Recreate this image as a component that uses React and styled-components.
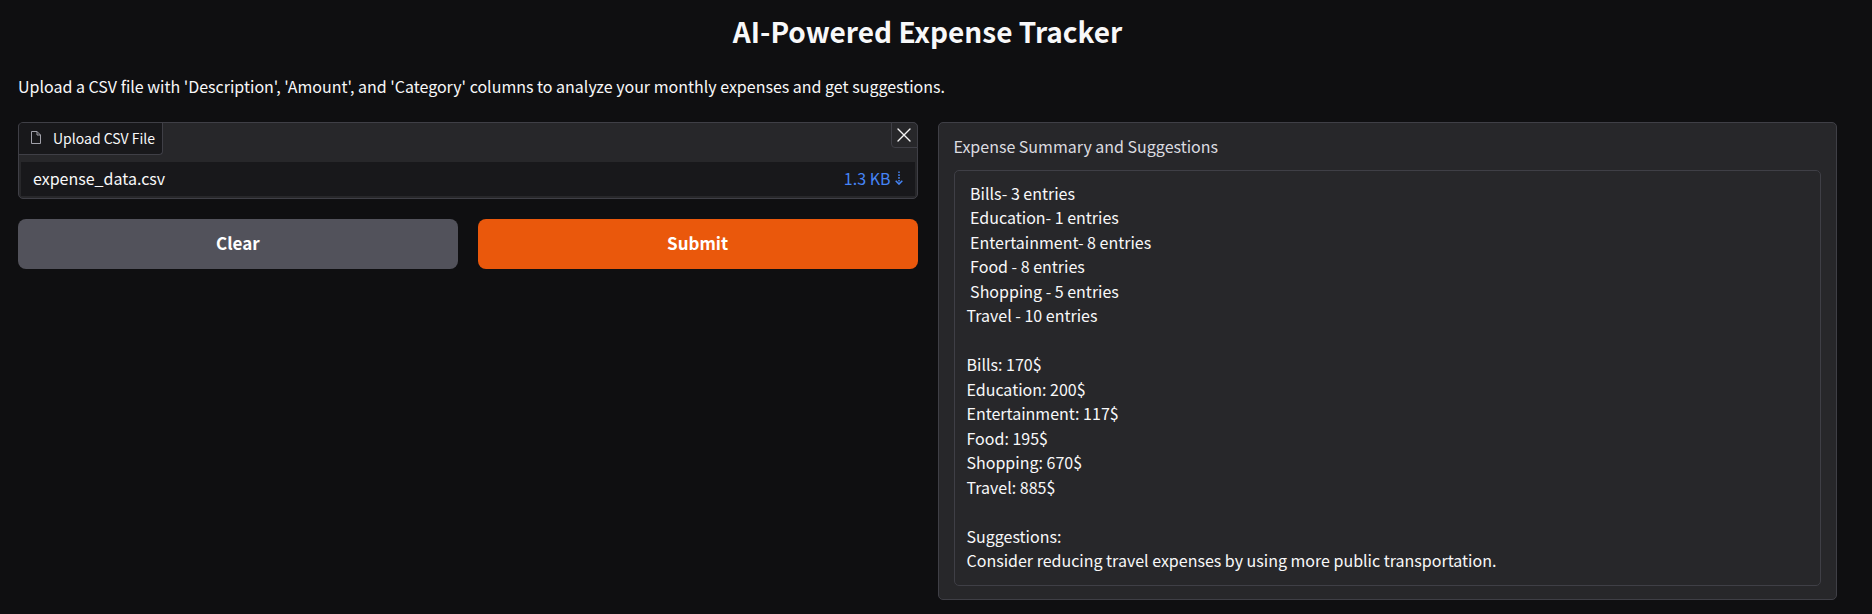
import React from "react";
import styled, { createGlobalStyle } from "styled-components";

const GlobalStyle = createGlobalStyle`
  *, *::before, *::after { box-sizing: border-box; }
  body {
    margin: 0;
    background: #0f0f11;
    color: #f8f8f9;
    font-family: "Noto Sans CJK SC", "Noto Sans", sans-serif;
    font-size: 16px;
    line-height: 24px;
  }
  button, textarea { font: inherit; color: inherit; }
`;

const Page = styled.main`
  display: flex;
  flex-direction: column;
  padding: 11px 35px 12px 18px;
`;

const Title = styled.h1`
  margin: 0;
  font-size: 28px;
  line-height: 40px;
  font-weight: 600;
  text-align: center;
`;

const Intro = styled.p`
  margin: 23px 0 24px;
`;

const Columns = styled.div`
  display: grid;
  grid-template-columns: repeat(2, minmax(0, 1fr));
  align-items: start;
  gap: 20px;
`;

const Stack = styled.div`
  display: flex;
  flex-direction: column;
  gap: 20px;
`;

const Panel = styled.section`
  position: relative;
  background: #27272a;
  border: 1px solid #3f3f46;
  border-radius: 5px;
`;

const FilePanel = styled(Panel)`
  padding: 0 2px 2px;
`;

const FileLabel = styled.h2`
  display: flex;
  align-items: center;
  gap: 11px;
  width: fit-content;
  margin: 0 0 7px -3px;
  padding: 3px 7px 4px 11px;
  border: 1px solid #3f3f46;
  border-top: 0;
  border-radius: 4px 0 4px 0;
  background: #18181b;
  font-size: 14px;
  font-weight: 400;
`;

const CloseButton = styled.button`
  position: absolute;
  top: -1px;
  right: -1px;
  display: grid;
  place-items: center;
  width: 27px;
  height: 26px;
  padding: 0;
  border: 1px solid #3f3f46;
  border-radius: 0 5px 0 4px;
  background: #27272a;
  cursor: pointer;
`;

const FileRow = styled.div`
  display: flex;
  align-items: center;
  justify-content: space-between;
  padding: 4px 12px 6px;
  background: #18181b;
`;

const DownloadLink = styled.a`
  display: flex;
  align-items: center;
  gap: 4px;
  color: #4584f6;
  text-decoration: none;
`;

const Actions = styled.div`
  display: grid;
  grid-template-columns: repeat(2, minmax(0, 1fr));
  gap: 20px;
`;

const ActionButton = styled.button`
  padding: 12px 16px 14px;
  border: 0;
  border-radius: 8px;
  background: ${({ $primary }) => ($primary ? "#ea580c" : "#52525b")};
  color: #ffffff;
  font-size: 17px;
  font-weight: 600;
  cursor: pointer;
`;

const OutputPanel = styled(Panel)`
  display: flex;
  flex-direction: column;
  gap: 12px;
  padding: 11px 15px 13px;
`;

const OutputLabel = styled.label`
  color: #dcdce0;
`;

const OutputText = styled.textarea`
  display: block;
  width: 100%;
  padding: 10px 12px 12px;
  border: 1px solid #3f3f46;
  border-radius: 5px;
  background: #27272a;
  line-height: 1.53;
  resize: none;
  overflow: hidden;
  outline: none;
`;

const FileIcon = () => (
  <svg width="12" height="14" viewBox="0 0 12 14" fill="none" stroke="#a1a1aa" strokeLinejoin="round" aria-hidden="true">
    <path d="M1.5 .5h5.5l3.5 3.5v8.5h-9z" />
    <path d="M7 .5v3.5h3.5" />
  </svg>
);

const CloseIcon = () => (
  <svg width="14" height="14" viewBox="0 0 14 14" stroke="#f4f4f5" strokeWidth="1.4" strokeLinecap="round" aria-hidden="true">
    <path d="M1 1l12 12M13 1L1 13" />
  </svg>
);

const DownIcon = () => (
  <svg width="8" height="14" viewBox="0 0 8 14" fill="none" stroke="currentColor" strokeWidth="1.5" aria-hidden="true">
    <path d="M4 .5v12.5" strokeDasharray="1.6 1.2" />
    <path d="M.7 9.8l3.3 3.3 3.3-3.3" />
  </svg>
);

const summary = [
  " Bills- 3 entries",
  " Education- 1 entries",
  " Entertainment- 8 entries",
  " Food - 8 entries",
  " Shopping - 5 entries",
  "Travel - 10 entries",
  "",
  "Bills: 170$",
  "Education: 200$",
  "Entertainment: 117$",
  "Food: 195$",
  "Shopping: 670$",
  "Travel: 885$",
  "",
  "Suggestions:",
  "Consider reducing travel expenses by using more public transportation.",
];

export default function App() {
  return (
    <>
      <GlobalStyle />
      <Page>
        <Title>AI-Powered Expense Tracker</Title>
        <Intro>
          Upload a CSV file with 'Description', 'Amount', and 'Category' columns to analyze your monthly expenses and get suggestions.
        </Intro>
        <Columns>
          <Stack>
            <FilePanel>
              <FileLabel>
                <FileIcon />
                Upload CSV File
              </FileLabel>
              <CloseButton type="button" aria-label="Remove file">
                <CloseIcon />
              </CloseButton>
              <FileRow>
                <span>expense_data.csv</span>
                <DownloadLink href="#expense_data.csv" download="expense_data.csv">
                  1.3 KB
                  <DownIcon />
                </DownloadLink>
              </FileRow>
            </FilePanel>
            <Actions>
              <ActionButton type="button">Clear</ActionButton>
              <ActionButton type="button" $primary>Submit</ActionButton>
            </Actions>
          </Stack>
          <OutputPanel>
            <OutputLabel htmlFor="summary">Expense Summary and Suggestions</OutputLabel>
            <OutputText id="summary" rows={summary.length} readOnly value={summary.join("\n")} />
          </OutputPanel>
        </Columns>
      </Page>
    </>
  );
}
